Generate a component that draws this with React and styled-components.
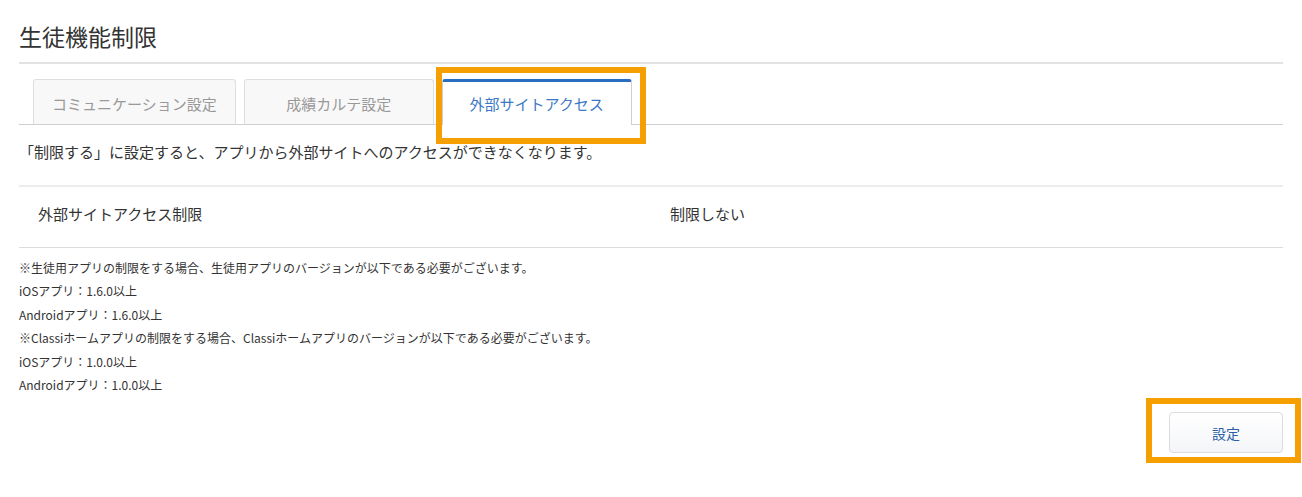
import React from 'react'
import styled, { createGlobalStyle } from 'styled-components'

const GlobalStyle = createGlobalStyle`
  html, body {
    margin: 0;
    padding: 0;
    background: #fff;
  }
  body {
    font-family: "Noto Sans CJK JP", "Noto Sans", sans-serif;
    color: #333;
  }
`

const Page = styled.div`
  width: 1264px;
  padding: 0 19px 30px;
`

const Title = styled.h1`
  margin: 0;
  padding: 19px 0 9px;
  font-size: 23px;
  font-weight: 400;
  line-height: 34px;
  color: #333;
  border-bottom: 2px solid #e2e2e2;
`

const TabList = styled.div`
  display: flex;
  gap: 8px;
  margin-top: 15px;
  padding-left: 14px;
  border-bottom: 1px solid #cfcfcf;
`

const Tab = styled.div`
  position: relative;
  box-sizing: border-box;
  min-width: 190px;
  height: ${p => (p.$active ? '46px' : '45px')};
  margin-bottom: ${p => (p.$active ? '-1px' : '0')};
  padding: ${p => (p.$active ? '0 18px' : '2px 18px 0')};
  display: flex;
  align-items: center;
  justify-content: center;
  font-size: 15px;
  color: ${p => (p.$active ? '#3b79c6' : '#999')};
  background: ${p => (p.$active ? '#fff' : '#f8f8f8')};
  border: 1px solid ${p => (p.$active ? '#cfcfcf' : '#dedede')};
  border-top: ${p => (p.$active ? '3px solid #2a6cbf' : '1px solid #dedede')};
  border-bottom: none;
  border-radius: 3px 3px 0 0;
`

const Callout = styled.span`
  position: absolute;
  top: ${p => p.$top}px;
  left: ${p => p.$left}px;
  right: ${p => p.$right}px;
  bottom: ${p => p.$bottom}px;
  border: 6px solid #f5a000;
  pointer-events: none;
  z-index: 2;
`

const Description = styled.p`
  margin: 0;
  padding: 16px 0 22px;
  font-size: 15px;
  line-height: 22px;
  border-bottom: 2px solid #ececec;
`

const SettingRow = styled.div`
  display: grid;
  grid-template-columns: 1fr 1fr;
  border-bottom: 1px solid #dcdcdc;
`

const Cell = styled.div`
  padding: 16px 19px 22px;
  font-size: 15px;
  line-height: 22px;
`

const Notes = styled.div`
  padding-top: 8px;
  font-size: 12px;
  line-height: 23.4px;
`

const Footer = styled.div`
  display: flex;
  justify-content: flex-end;
  margin-top: 16px;
`

const ButtonWrap = styled.div`
  position: relative;
  display: flex;
`

const Button = styled.button`
  width: 114px;
  height: 41px;
  font-family: inherit;
  font-size: 14px;
  color: #2a5ea8;
  background: linear-gradient(#ffffff, #f4f5f8);
  border: 1px solid #dcdcdc;
  border-radius: 4px;
  cursor: pointer;
`

const notes = [
  '※生徒用アプリの制限をする場合、生徒用アプリのバージョンが以下である必要がございます。',
  'iOSアプリ：1.6.0以上',
  'Androidアプリ：1.6.0以上',
  '※Classiホームアプリの制限をする場合、Classiホームアプリのバージョンが以下である必要がございます。',
  'iOSアプリ：1.0.0以上',
  'Androidアプリ：1.0.0以上'
]

export default function App () {
  return <>
    <GlobalStyle />
    <Page>
      <Title>生徒機能制限</Title>
      <TabList>
        <Tab>コミュニケーション設定</Tab>
        <Tab>成績カルテ設定</Tab>
        <Tab $active>
          外部サイトアクセス
          <Callout $top={-15} $left={-7} $right={-15} $bottom={-19} />
        </Tab>
      </TabList>
      <Description>「制限する」に設定すると、アプリから外部サイトへのアクセスができなくなります。</Description>
      <SettingRow>
        <Cell>外部サイトアクセス制限</Cell>
        <Cell>制限しない</Cell>
      </SettingRow>
      <Notes>
        {notes.map(line => <div key={line}>{line}</div>)}
      </Notes>
      <Footer>
        <ButtonWrap>
          <Button>設定</Button>
          <Callout $top={-14} $left={-23} $right={-18} $bottom={-10} />
        </ButtonWrap>
      </Footer>
    </Page>
  </>
}
